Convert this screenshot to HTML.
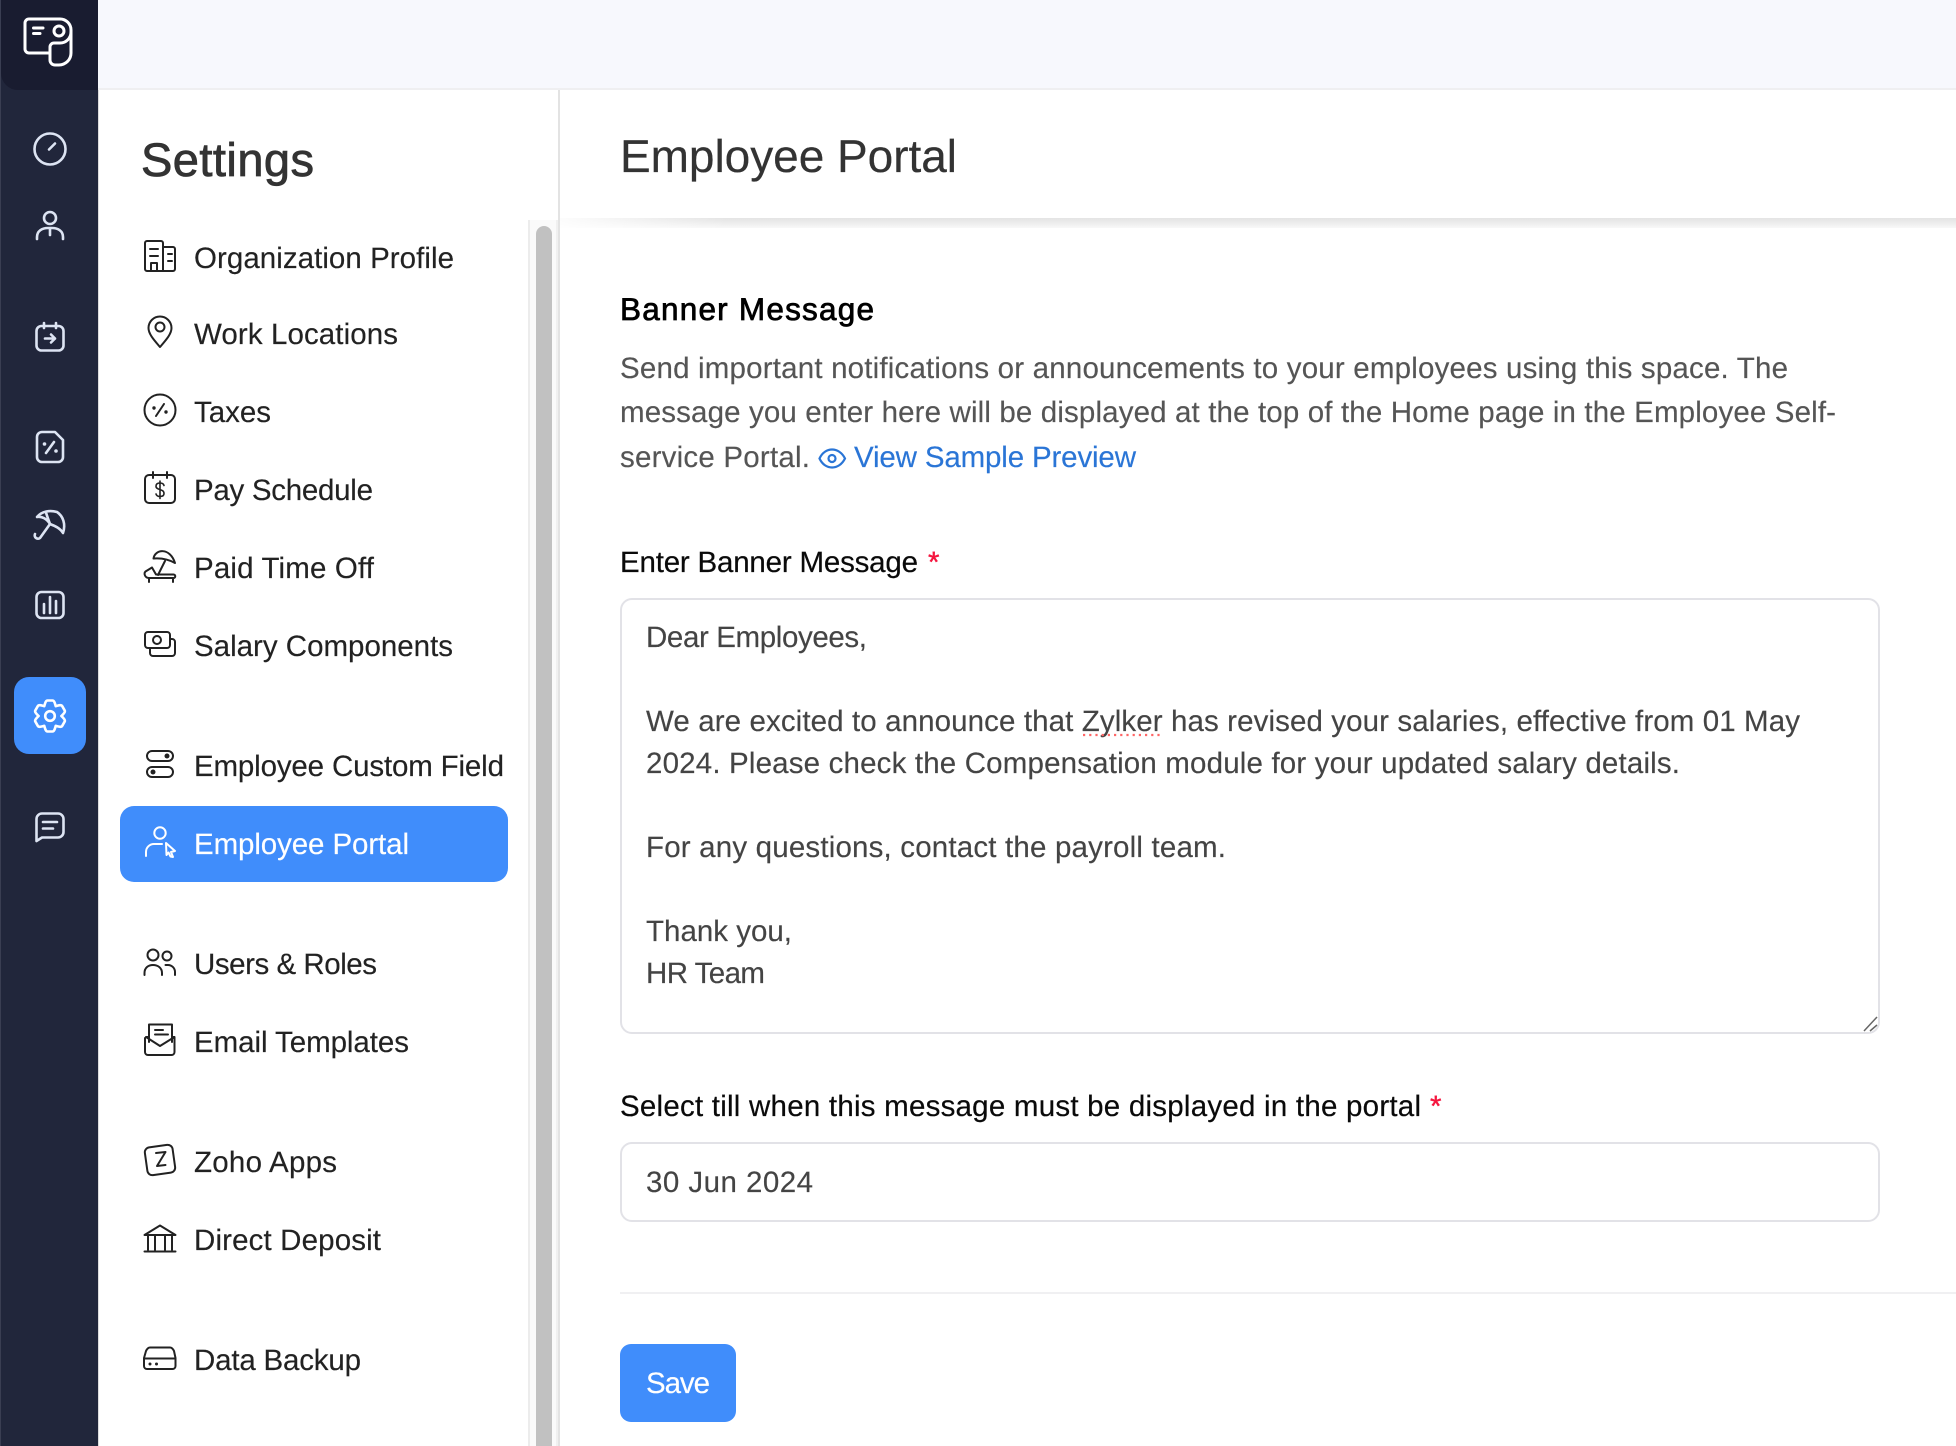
<!DOCTYPE html>
<html lang="en"><head><meta charset="utf-8"><title>Employee Portal</title>
<style>
html,body{margin:0;padding:0;background:#fff;width:1956px;height:1446px;overflow:hidden}
svg{display:block}
text{font-family:"Liberation Sans",Arial,sans-serif;text-rendering:geometricPrecision;white-space:pre}
.n{font-size:29.5px;fill:#222;stroke:#222;stroke-width:.15}
.p{font-size:29.5px;fill:#555;stroke:#555;stroke-width:.15}
.t{font-size:29.5px;fill:#444;stroke:#444;stroke-width:.15}
.l{font-size:29.5px;fill:#0a0a0a;stroke:#0a0a0a;stroke-width:.2}
.side{fill:none;stroke:#dde4f3;stroke-width:2.6;stroke-linecap:round;stroke-linejoin:round}
.ic{fill:none;stroke:#222;stroke-width:2;stroke-linecap:round;stroke-linejoin:round}
.w{fill:none;stroke:#fff;stroke-width:2.6;stroke-linecap:round;stroke-linejoin:round}
</style></head><body>
<svg xmlns="http://www.w3.org/2000/svg" width="1956" height="1446" viewBox="0 0 1956 1446">
<defs>
<linearGradient id="sh" x1="0" y1="0" x2="0" y2="1"><stop offset="0" stop-color="#e4e4e4"/><stop offset=".3" stop-color="#e9e9e9"/><stop offset="1" stop-color="#f8f8f8"/></linearGradient>
<linearGradient id="shx" x1="0" y1="0" x2="1" y2="0"><stop offset="0" stop-color="#fff" stop-opacity=".9"/><stop offset=".12" stop-color="#fff" stop-opacity="0"/></linearGradient>
</defs>
<rect width="1956" height="1446" fill="#fff"/>
<!-- top bar -->
<rect x="98" y="0" width="1858" height="88" fill="#f7f8fd"/>
<rect x="98" y="88" width="1858" height="2" fill="#efeff1"/>
<!-- sidebar -->
<rect x="0" y="0" width="98" height="1446" fill="#21263b"/>
<rect x="0" y="0" width="1" height="1446" fill="#3a3e52"/>
<rect x="98" y="90" width="1" height="1356" fill="#dcdcdc"/>
<path d="M1 0H98V90H18A17 17 0 0 1 1 73Z" fill="#191c30"/>
<!-- logo -->
<g fill="none" stroke="#fff" stroke-width="3" stroke-linecap="round" stroke-linejoin="round">
<path d="M50 53H29a4 4 0 0 1-4-4V23a4 4 0 0 1 4-4H60a11 11 0 0 1 11 11V53a12 12 0 0 1-12 12H55a5 5 0 0 1-5-5V47a4 4 0 0 1 4-4H60a11 11 0 0 0 11-11"/>
<circle cx="59" cy="31" r="5"/>
<path d="M33.500 28H43M33.500 33.500H40"/>
</g>
<!-- side icons -->
<g class="side">
<circle cx="50" cy="149" r="15.500"/><path d="M49 149.500L55 143.500"/>
<circle cx="50" cy="218" r="6"/><path d="M37 239V237C37 231 42 228 48 228H52C58 228 63 231 63 237V239M50 229V235"/>
<rect x="36.500" y="326" width="27" height="24.500" rx="5"/><path d="M44 323V328M56 323V328M45 338.500H55M51 334.500L55 338.500L51 342.500"/>
<path d="M42 432H55L63 440V457a5 5 0 0 1-5 5H42a5 5 0 0 1-5-5V437a5 5 0 0 1 5-5Z"/><path d="M46 453L54 442"/>
<path d="M37 517C42 511 50 510 57 512C63 516 66 524 63 533C60 528 55 526 50 524C47 519 42 516 37 517ZM46 512.500C47 516 48.500 520 50 524M50 524L40 538a3.300 3.300 0 0 1-5-4"/>
<rect x="36.500" y="592" width="27" height="26" rx="5"/><path d="M44 604V613M50 597V613M56 601V613"/>
<path d="M42 813.500H58a5.500 5.500 0 0 1 5.500 5.500V832a5.500 5.500 0 0 1-5.500 5.500H42L36.500 841V819a5.500 5.500 0 0 1 5.500-5.500ZM43 822H57M43 828.500H53"/>
</g>
<g fill="#dde4f3"><circle cx="44.500" cy="444" r="1.800"/><circle cx="56" cy="451" r="1.800"/></g>
<rect x="14" y="677" width="72" height="77" rx="15" fill="#408dfb"/>
<g class="w" transform="translate(50 716)">
<circle r="4.800"/>
<path d="M-5.750-9.960C-5-12-4.500-15.500-2.500-15.500H2.500C4.500-15.500 5-12 5.750-9.960"/>
<path transform="rotate(60)" d="M-5.750-9.960C-5-12-4.500-15.500-2.500-15.500H2.500C4.500-15.500 5-12 5.750-9.960"/>
<path transform="rotate(120)" d="M-5.750-9.960C-5-12-4.500-15.500-2.500-15.500H2.500C4.500-15.500 5-12 5.750-9.960"/>
<path transform="rotate(180)" d="M-5.750-9.960C-5-12-4.500-15.500-2.500-15.500H2.500C4.500-15.500 5-12 5.750-9.960"/>
<path transform="rotate(240)" d="M-5.750-9.960C-5-12-4.500-15.500-2.500-15.500H2.500C4.500-15.500 5-12 5.750-9.960"/>
<path transform="rotate(300)" d="M-5.750-9.960C-5-12-4.500-15.500-2.500-15.500H2.500C4.500-15.500 5-12 5.750-9.960"/>
</g>
<!-- settings panel -->
<text x="141" y="176" font-size="47" fill="#333" stroke="#333" stroke-width=".8" textLength="173">Settings</text>
<rect x="528" y="220" width="2" height="1226" fill="#ececec"/>
<rect x="530" y="220" width="27" height="1226" fill="#fafafa"/>
<rect x="536" y="226" width="16" height="1230" rx="8" fill="#c1c1c1"/>
<rect x="558" y="90" width="2" height="1356" fill="#e3e3e3"/>
<rect x="556" y="220" width="2" height="1226" fill="#f0f0f0"/>
<!-- active -->
<rect x="120" y="806" width="388" height="76" rx="14" fill="#408dfb"/>
<!-- nav text -->
<text class="n" x="194" y="268" textLength="260">Organization Profile</text>
<text class="n" x="194" y="344" textLength="204">Work Locations</text>
<text class="n" x="194" y="422" textLength="77">Taxes</text>
<text class="n" x="194" y="500" textLength="179">Pay Schedule</text>
<text class="n" x="194" y="578" textLength="180">Paid Time Off</text>
<text class="n" x="194" y="656" textLength="259">Salary Components</text>
<text class="n" x="194" y="776" textLength="310">Employee Custom Field</text>
<text class="n" x="194" y="854" textLength="215" style="fill:#fff;stroke:#fff">Employee Portal</text>
<text class="n" x="194" y="974" textLength="183">Users &amp; Roles</text>
<text class="n" x="194" y="1052" textLength="215">Email Templates</text>
<text class="n" x="194" y="1172" textLength="143">Zoho Apps</text>
<text class="n" x="194" y="1250" textLength="187">Direct Deposit</text>
<text class="n" x="194" y="1370" textLength="167">Data Backup</text>
<!-- nav icons -->
<g class="ic">
<path d="M163 271H147a2 2 0 0 1-2-2V243a2 2 0 0 1 2-2H161a2 2 0 0 1 2 2V271ZM163 247H173a2 2 0 0 1 2 2V269a2 2 0 0 1-2 2H163M150 249H158M150 256H158M151 271V263H157V271M168 254H172M168 261H172"/>
<path d="M160 347C154 340 148.500 334 148.500 328A11.500 11.500 0 0 1 171.500 328C171.500 334 166 340 160 347Z"/><circle cx="160" cy="327" r="4.500"/>
<circle cx="160" cy="410" r="15.500"/><path d="M156 416L164 404"/>
<rect x="145" y="475" width="30" height="28" rx="4"/><path d="M153 472V478M167 472V478"/>
<path d="M164 485.500C163.500 483.500 162 483 160 483C157.500 483 156 484 156 486.200C156 490.500 164 488.500 164 493.500C164 495.500 162.500 496.500 160 496.500C158 496.500 156.500 495.500 156 494M160 481V498.500" stroke-width="1.600"/>
<path d="M153.500 558.500C155 549 170 547 175 563C168 559 160 558 153.500 558.500ZM165 561L158 575"/>
<path d="M152 567.500L145.500 571.500C143.500 573.500 145 578 149 578H173.500a1.700 1.700 0 0 0 0-3.500H156L152 567.500M149 578V582M173 578V582"/>
<rect x="145" y="632" width="25" height="16" rx="3"/><circle cx="157" cy="640" r="4"/><path d="M150 648V653a3 3 0 0 0 3 3H172a3 3 0 0 0 3-3V642a3 3 0 0 0-3-3H170"/>
<rect x="147" y="751" width="26" height="10" rx="5"/><rect x="147" y="767" width="26" height="10" rx="5"/>
<circle cx="153" cy="955" r="5.500"/><circle cx="167" cy="956" r="4.500"/><path d="M144.500 975V973C144.500 968 148 965 153 965C158 965 162 968 162 973V975M165.500 965H168a7 7 0 0 1 7 7V975"/>
<path d="M149 1042V1024.500H172V1042M155 1030H163M155 1034.500H168M146 1037L160 1046L174.500 1037M146 1037H149M172 1037H174.500V1052a3 3 0 0 1-3 3H148a3 3 0 0 1-3-3V1038"/>
<rect x="146" y="1146" width="28" height="28" rx="5" transform="rotate(-8 160 1160)"/><path d="M156 1153L165.500 1152L157 1166L165.500 1165"/>
<path d="M144.500 1235L160 1225.500L175.500 1235ZM148 1235V1250M155 1235V1250M165 1235V1250M172 1235V1250M144.500 1251.500H175.500"/>
<path d="M150 1347.500H170C172 1347.500 173 1349 174 1351L175.500 1358V1366a3 3 0 0 1-3 3H147a3 3 0 0 1-3-3V1358L146 1351C147 1349 148 1347.500 150 1347.500ZM144 1358.500H175.500"/>
</g>
<g fill="#222"><circle cx="167" cy="756" r="2.500"/><circle cx="153" cy="772" r="2.500"/><circle cx="150" cy="1364" r="1.500"/><circle cx="156.500" cy="1364" r="1.500"/><circle cx="154" cy="408" r="1.700"/><circle cx="166" cy="412" r="1.700"/></g>
<g fill="none" stroke="#fff" stroke-width="2" stroke-linecap="round" stroke-linejoin="round">
<circle cx="160" cy="833" r="5.700"/><path d="M146 856V852a8 8 0 0 1 8-8H162M166 843L175 851L171 852L173 857L170.500 856.500L168.500 852.500L166.500 855Z"/>
</g>
<!-- header -->
<text x="620" y="172" font-size="46" fill="#333" stroke="#333" stroke-width=".2" textLength="337">Employee Portal</text>
<rect x="560" y="218" width="1396" height="10" fill="url(#sh)"/>
<rect x="560" y="218" width="1396" height="10" fill="url(#shx)"/>
<!-- content -->
<text x="620" y="320" font-size="31.5" fill="#000" stroke="#000" stroke-width=".75" textLength="254">Banner Message</text>
<text class="p" x="620" y="378" textLength="1168">Send important notifications or announcements to your employees using this space. The</text>
<text class="p" x="620" y="422" textLength="1216">message you enter here will be displayed at the top of the Home page in the Employee Self-</text>
<text class="p" x="620" y="467" textLength="190">service Portal.</text>
<g fill="none" stroke="#2a75d6" stroke-width="2.200"><path d="M819.500 458.500C825 446.500 839 446.500 845 458.500C839 470.500 825 470.500 819.500 458.500Z"/><circle cx="832" cy="458.500" r="3.500"/></g>
<text x="854" y="467" font-size="29.500" fill="#2a75d6" stroke="#2a75d6" stroke-width=".15" textLength="282">View Sample Preview</text>
<text class="l" x="620" y="572" textLength="298">Enter Banner Message</text>
<text x="928" y="572" font-size="29.500" fill="#f5163f" stroke="#f5163f" stroke-width=".4">*</text>
<rect x="621" y="599" width="1258" height="434" rx="11" fill="#fff" stroke="#e2e2e7" stroke-width="2"/>
<text class="t" x="646" y="647" textLength="221">Dear Employees,</text>
<text class="t" x="646" y="731" textLength="1154">We are excited to announce that Zylker has revised your salaries, effective from 01 May</text>
<text class="t" x="646" y="773" textLength="1034">2024. Please check the Compensation module for your updated salary details.</text>
<text class="t" x="646" y="857" textLength="580">For any questions, contact the payroll team.</text>
<text class="t" x="646" y="941" textLength="146">Thank you,</text>
<text class="t" x="646" y="983" textLength="119">HR Team</text>
<path d="M1083 735H1163" stroke="#f66" stroke-width="2.200" stroke-dasharray="2.200 4" fill="none"/>
<path d="M1864 1031L1877 1017M1870 1031L1877 1025" stroke="#666" stroke-width="1.500" fill="none"/>
<text class="l" x="620" y="1116" textLength="801">Select till when this message must be displayed in the portal</text>
<text x="1430" y="1116" font-size="29.500" fill="#f5163f" stroke="#f5163f" stroke-width=".4">*</text>
<rect x="621" y="1143" width="1258" height="78" rx="11" fill="#fff" stroke="#e2e2e7" stroke-width="2"/>
<text class="t" x="646" y="1192" textLength="167">30 Jun 2024</text>
<rect x="620" y="1292" width="1336" height="2" fill="#f0f0f2"/>
<rect x="620" y="1344" width="116" height="78" rx="11" fill="#408dfb"/>
<text x="646" y="1393" font-size="29.500" fill="#fff" stroke="#fff" stroke-width=".15" textLength="64">Save</text>
</svg>
</body></html>
